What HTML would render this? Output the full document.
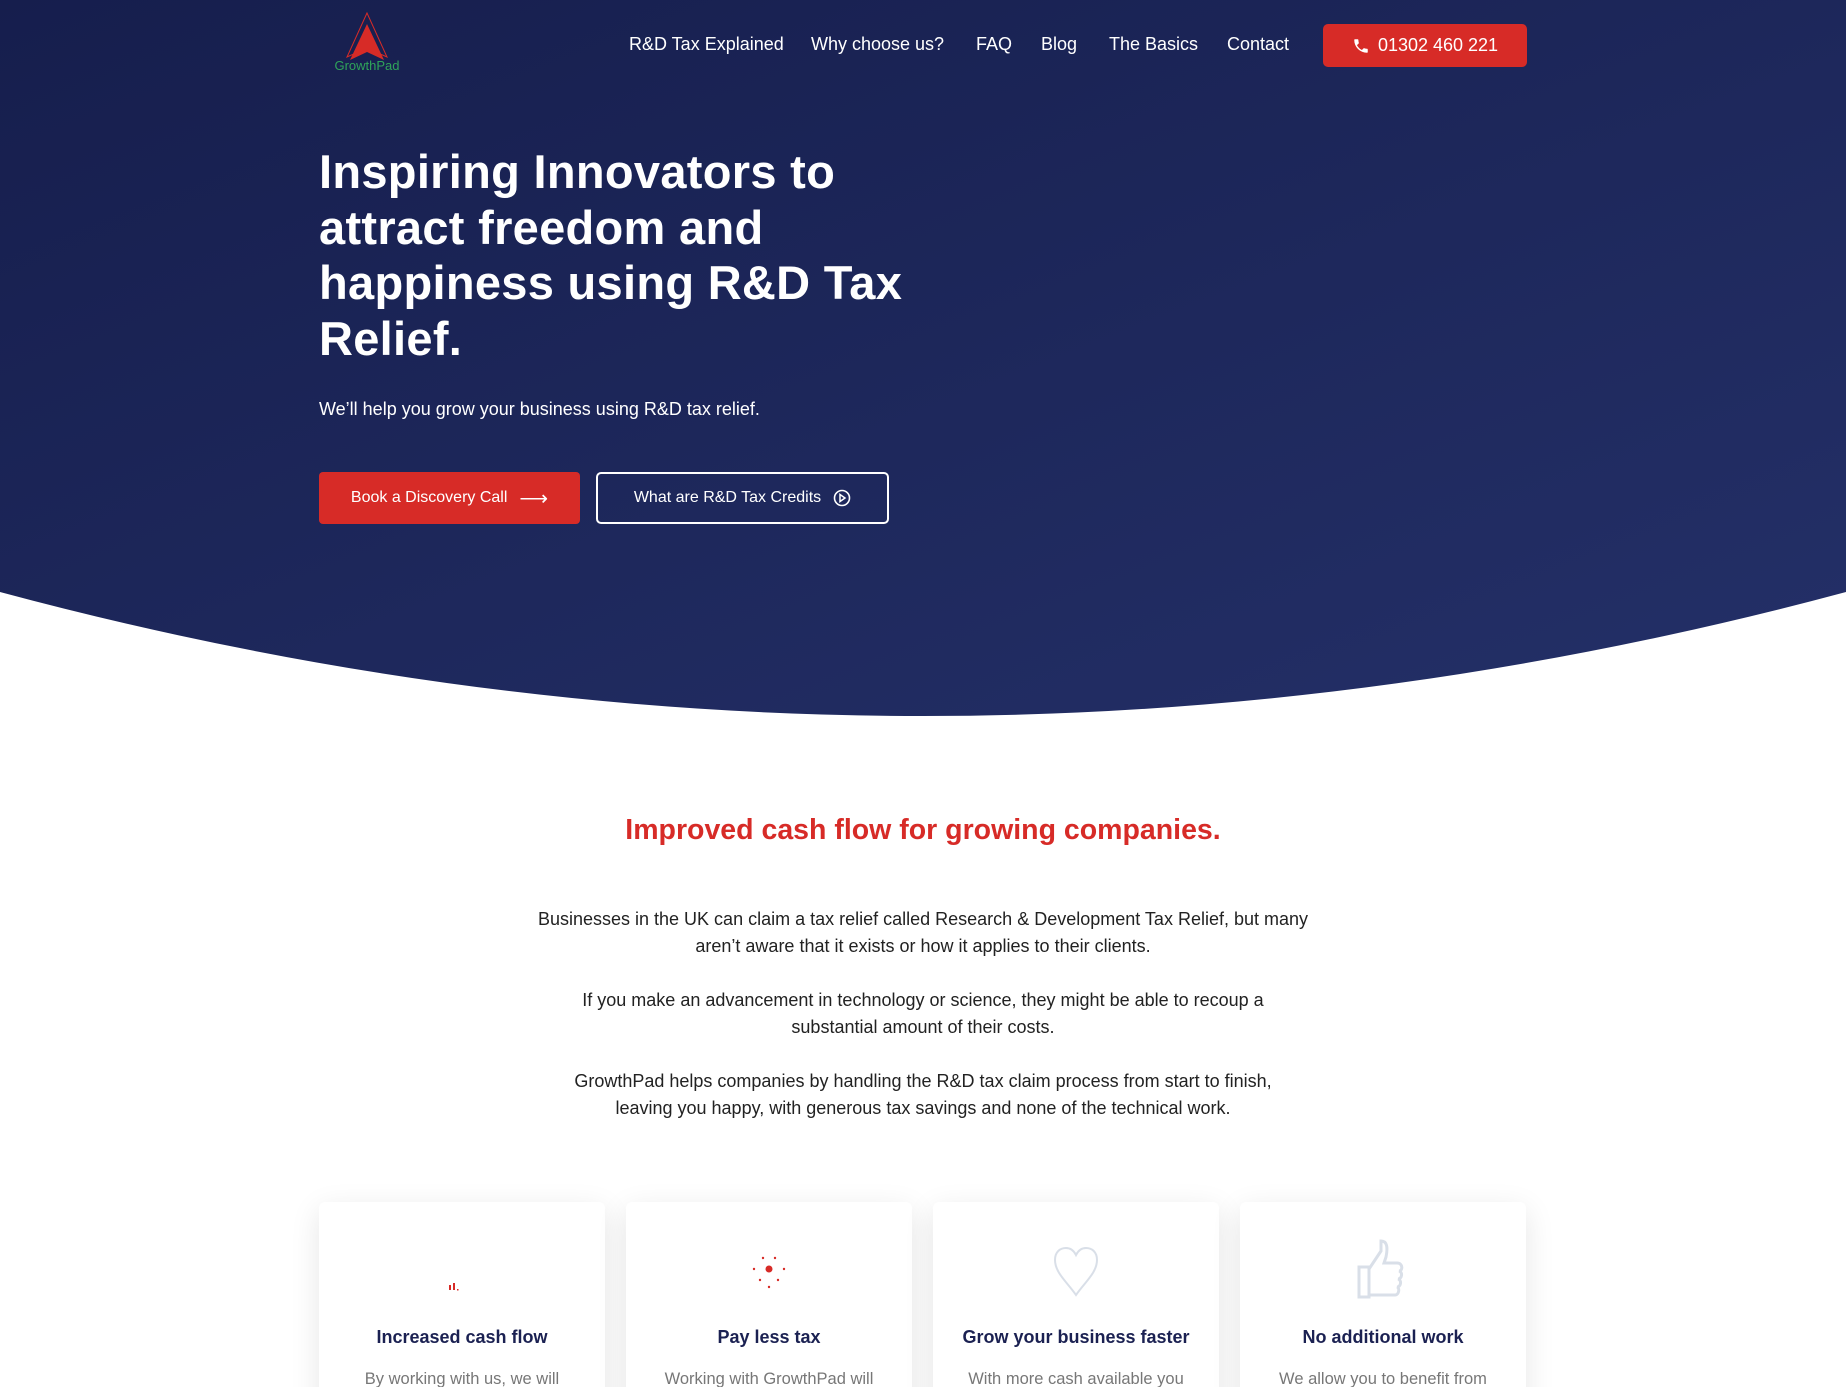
<!DOCTYPE html>
<html style="overflow:hidden;height:1387px"><head><meta charset="utf-8"><style>
*{margin:0;padding:0;box-sizing:border-box}
body{width:1846px;height:1387px;overflow:hidden;background:#fff;font-family:"Liberation Sans",sans-serif;position:relative}
.hero{position:absolute;left:0;top:0;width:1846px;height:720px}
.nav a{position:absolute;top:34px;color:#fff;font-size:18px;text-decoration:none}
.phone{position:absolute;left:1323px;top:24px;width:204px;height:43px;background:#d72b27;border-radius:5px;color:#fff;font-size:18px;display:flex;align-items:center;justify-content:center;gap:8px}
h1{position:absolute;left:319px;top:144px;width:640px;color:#fff;font-size:47px;line-height:55.5px;font-weight:bold;letter-spacing:0.3px}
.sub{position:absolute;left:319px;top:399px;color:#fff;font-size:18px}
.b1{position:absolute;left:319px;top:472px;width:261px;height:52px;background:#d72b27;border-radius:4px;color:#fff;font-size:16px;display:flex;align-items:center;justify-content:center;gap:12px}
.b2{position:absolute;left:596px;top:472px;width:293px;height:52px;border:2px solid #fff;border-radius:5px;color:#fff;font-size:16px;display:flex;align-items:center;justify-content:center;gap:12px}
h2{position:absolute;left:0;width:1846px;top:814px;text-align:center;color:#d72b27;font-size:28.5px;font-weight:bold}
.p{position:absolute;left:0;width:1846px;text-align:center;color:#222;font-size:18px;line-height:27px}
.card{position:absolute;top:1202px;width:286px;height:220px;background:#fff;border-radius:6px;box-shadow:0 8px 30px rgba(0,0,0,.1)}
.card h3{position:absolute;top:125px;width:100%;text-align:center;color:#1b2152;font-size:18px;font-weight:bold}
.card p{position:absolute;top:168px;width:100%;text-align:center;color:#777;font-size:16.5px}
.card svg{position:absolute;left:113px;top:37px}
</style></head><body>
<svg class="hero" viewBox="0 0 1846 720" preserveAspectRatio="none"><defs><linearGradient id="g" x1="0" y1="0" x2="1" y2="1"><stop offset="0" stop-color="#161e4d"/><stop offset="1" stop-color="#243068"/></linearGradient></defs><path d="M0 0H1846V592Q923 840 0 592Z" fill="url(#g)"/></svg>
<svg style="position:absolute;left:330px;top:12px" width="75" height="62" viewBox="0 0 75 62"><path d="M37 1L17 45L37 36L57 45Z" fill="none" stroke="#d72b27" stroke-width="1"/><path d="M37 12L20 48L37 40L54 48Z" fill="#d72b27"/><text x="37" y="58" text-anchor="middle" font-family="Liberation Sans" font-size="13" fill="#2fa35a">GrowthPad</text></svg>
<div class="nav"><a style="left:629px">R&amp;D Tax Explained</a><a style="left:811px">Why choose us?</a><a style="left:976px">FAQ</a><a style="left:1041px">Blog</a><a style="left:1109px">The Basics</a><a style="left:1227px">Contact</a></div>
<div class="phone"><svg width="18" height="18" viewBox="0 0 24 24"><path d="M6.6 10.8a15 15 0 006.6 6.6l2.2-2.2c.3-.3.7-.4 1-.2 1.1.4 2.3.6 3.6.6.6 0 1 .4 1 1V20c0 .6-.4 1-1 1A17 17 0 013 4c0-.6.4-1 1-1h3.5c.6 0 1 .4 1 1 0 1.3.2 2.5.6 3.6.1.3 0 .7-.2 1z" fill="#fff"/></svg>01302 460 221</div>
<h1>Inspiring Innovators to attract freedom and happiness using R&amp;D Tax Relief.</h1>
<div class="sub">We’ll help you grow your business using R&amp;D tax relief.</div>
<div class="b1">Book a Discovery Call <span style="font-size:20px">⟶</span></div>
<div class="b2">What are R&amp;D Tax Credits <svg width="18" height="18" viewBox="0 0 18 18"><circle cx="9" cy="9" r="7.5" fill="none" stroke="#fff" stroke-width="1.6"/><path d="M7 5.5L12 9L7 12.5Z" fill="none" stroke="#fff" stroke-width="1.5"/></svg></div>
<h2>Improved cash flow for growing companies.</h2>
<div class="p" style="top:906px">Businesses in the UK can claim a tax relief called Research &amp; Development Tax Relief, but many<br>aren’t aware that it exists or how it applies to their clients.</div>
<div class="p" style="top:987px">If you make an advancement in technology or science, they might be able to recoup a<br>substantial amount of their costs.</div>
<div class="p" style="top:1068px">GrowthPad helps companies by handling the R&amp;D tax claim process from start to finish,<br>leaving you happy, with generous tax savings and none of the technical work.</div>
<div class="card" style="left:319px"><svg width="60" height="60" viewBox="0 0 60 60"><rect x="17" y="46" width="2" height="5" fill="#d72b27"/><rect x="21" y="44" width="2" height="7" fill="#d72b27"/><rect x="25" y="50" width="1.5" height="1.5" fill="#d72b27"/></svg><h3>Increased cash flow</h3><p>By working with us, we will</p></div>
<div class="card" style="left:626px"><svg width="60" height="60" viewBox="0 0 60 60" fill="#d72b27"><circle cx="30" cy="30" r="3.5"/><circle cx="24" cy="19" r="1.2"/><circle cx="36" cy="19" r="1.2"/><circle cx="15" cy="30" r="1.2"/><circle cx="45" cy="30" r="1.2"/><circle cx="21" cy="41" r="1.2"/><circle cx="39" cy="41" r="1.2"/><circle cx="30" cy="48" r="1.2"/></svg><h3>Pay less tax</h3><p>Working with GrowthPad will</p></div>
<div class="card" style="left:933px"><svg width="60" height="60" viewBox="0 0 60 60"><path d="M30 56C22 44 9 34 9 21 9 13 14 9 20 9c5 0 8 3 10 7 2-4 5-7 10-7 6 0 11 4 11 12 0 13-13 23-21 35z" fill="none" stroke="#d9dfe8" stroke-width="2"/></svg><h3>Grow your business faster</h3><p>With more cash available you</p></div>
<div class="card" style="left:1240px"><svg width="66" height="62" viewBox="0 0 66 62"><path d="M6 28H16V58H6Z M16 30L28 12V2C34 2 35 8 33 18L31 24H44C50 24 50 32 46 32 50 33 49 40 45 40 49 41 48 48 44 48 47 49 46 56 42 56H16" fill="none" stroke="#d9dfe8" stroke-width="3"/></svg><h3>No additional work</h3><p>We allow you to benefit from</p></div>
</body></html>
